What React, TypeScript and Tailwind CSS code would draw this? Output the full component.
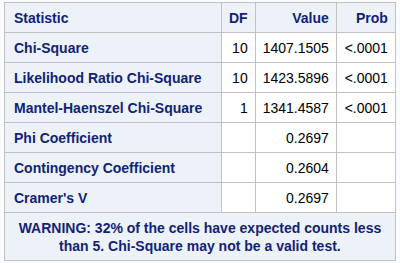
const rows = [
  { stat: "Chi-Square", df: "10", value: "1407.1505", prob: "<.0001" },
  { stat: "Likelihood Ratio Chi-Square", df: "10", value: "1423.5896", prob: "<.0001" },
  { stat: "Mantel-Haenszel Chi-Square", df: "1", value: "1341.4587", prob: "<.0001" },
  { stat: "Phi Coefficient", df: "", value: "0.2697", prob: "" },
  { stat: "Contingency Coefficient", df: "", value: "0.2604", prob: "" },
  { stat: "Cramer's V", df: "", value: "0.2697", prob: "" },
];

const head = "border border-[#c1c1c1] bg-[#edf2f9] font-bold text-[#112277]";
const cell = "border border-[#c1c1c1] bg-white text-black text-right px-[7px]";

export default function App() {
  return (
    <div
      className="h-[263px] w-[400px] bg-[#fafbfe] pl-[4px] pt-[2px]"
      style={{ fontFamily: '"Liberation Sans", Arial, sans-serif' }}
    >
      <table className="border-collapse border border-[#b0b0b0] text-[14px] leading-none">
        <colgroup>
          <col className="w-[217px]" />
          <col className="w-[31px]" />
          <col className="w-[80px]" />
          <col className="w-[59px]" />
        </colgroup>
        <thead>
          <tr className="h-[30px]">
            <th className={`${head} text-left pl-[9px]`}>Statistic</th>
            <th className={`${head} text-right px-[7px]`}>DF</th>
            <th className={`${head} text-right px-[7px]`}>Value</th>
            <th className={`${head} text-right px-[7px]`}>Prob</th>
          </tr>
        </thead>
        <tbody>
          {rows.map((r) => (
            <tr key={r.stat} className="h-[30px]">
              <th className={`${head} text-left pl-[9px] whitespace-nowrap`}>{r.stat}</th>
              <td className={cell}>{r.df}</td>
              <td className={cell}>{r.value}</td>
              <td className={cell}>{r.prob}</td>
            </tr>
          ))}
          <tr className="h-[48px]">
            <td colSpan={4} className={`${head} text-center px-[8px] leading-[18px]`}>
              WARNING: 32% of the cells have expected counts less
              <br />
              than 5. Chi-Square may not be a valid test.
            </td>
          </tr>
        </tbody>
      </table>
    </div>
  );
}
